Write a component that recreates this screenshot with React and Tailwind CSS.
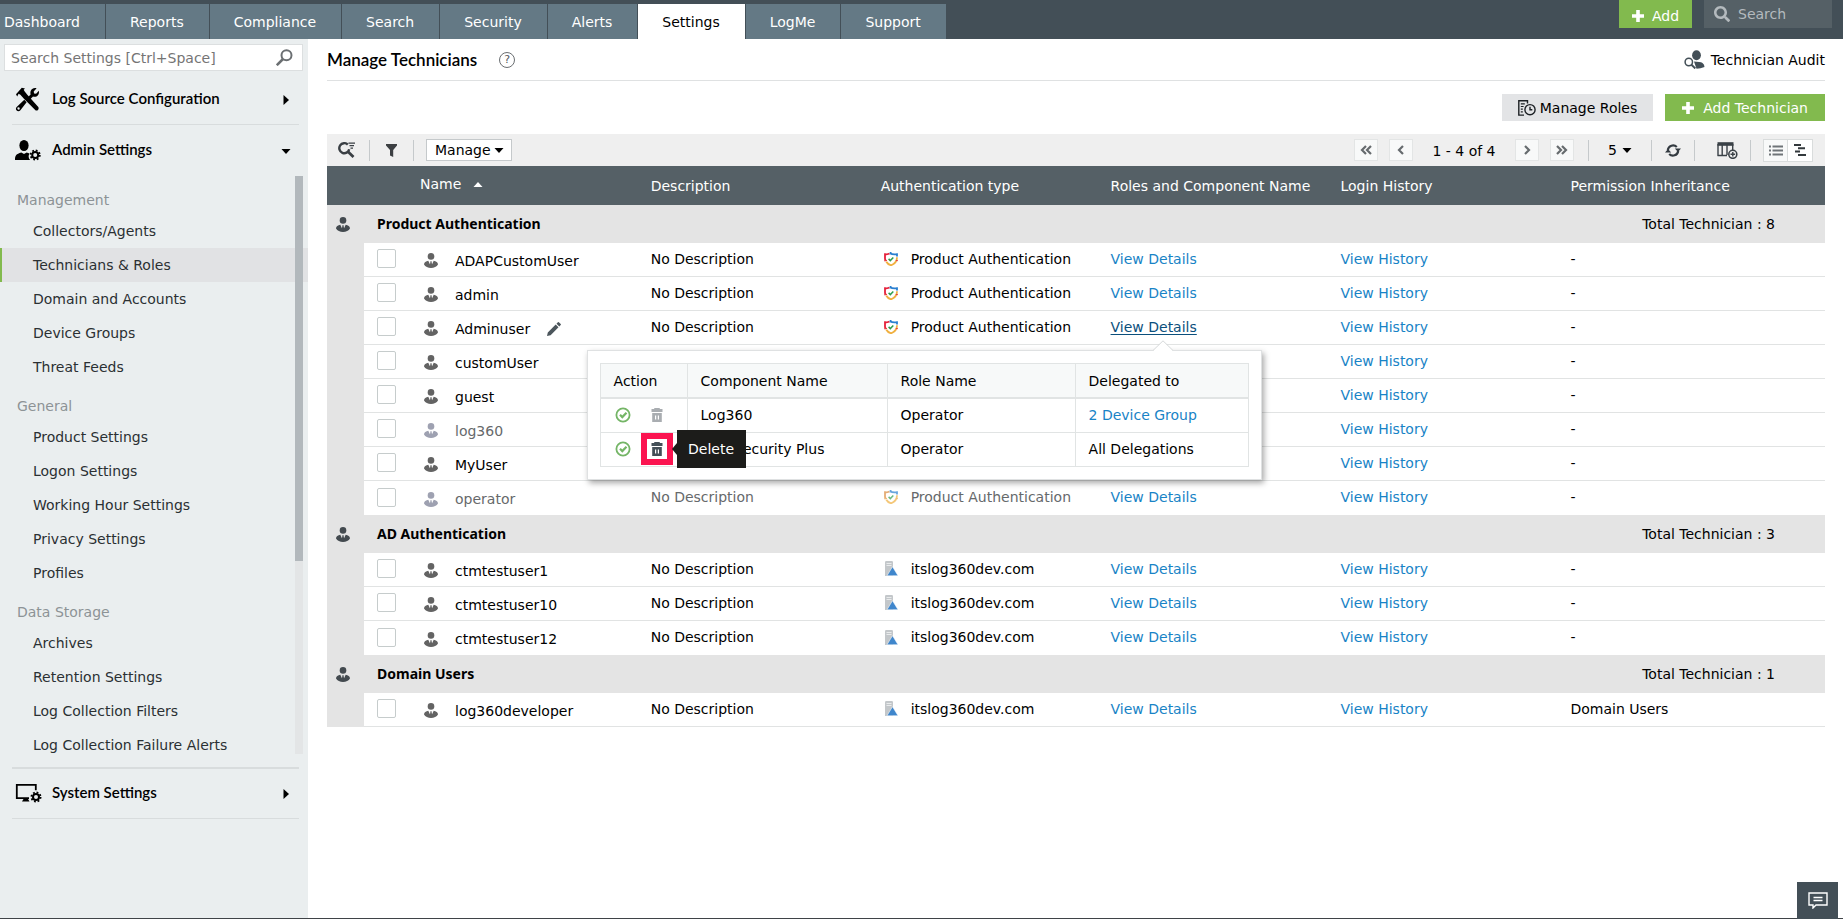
import { useState } from 'react'
import clsx from 'clsx'
import { FaSearch } from 'react-icons/fa'

const LINK = 'text-[#1883c6] hover:underline'

const tabs = ['Dashboard', 'Reports', 'Compliance', 'Search', 'Security', 'Alerts', 'Settings', 'LogMe', 'Support']

const menu = [
  {
    title: 'Management',
    items: ['Collectors/Agents', 'Technicians & Roles', 'Domain and Accounts', 'Device Groups', 'Threat Feeds'],
  },
  {
    title: 'General',
    items: ['Product Settings', 'Logon Settings', 'Working Hour Settings', 'Privacy Settings', 'Profiles'],
  },
  {
    title: 'Data Storage',
    items: ['Archives', 'Retention Settings', 'Log Collection Filters', 'Log Collection Failure Alerts'],
  },
]

const groups = [
  {
    title: 'Product Authentication',
    total: 8,
    auth: 'Product Authentication',
    users: [
      { name: 'ADAPCustomUser' },
      { name: 'admin' },
      { name: 'Adminuser', active: true },
      { name: 'customUser' },
      { name: 'guest' },
      { name: 'log360', disabled: true },
      { name: 'MyUser' },
      { name: 'operator', disabled: true },
    ],
  },
  {
    title: 'AD Authentication',
    total: 3,
    auth: 'itslog360dev.com',
    domain: true,
    users: [{ name: 'ctmtestuser1' }, { name: 'ctmtestuser10' }, { name: 'ctmtestuser12' }],
  },
  {
    title: 'Domain Users',
    total: 1,
    auth: 'itslog360dev.com',
    domain: true,
    users: [{ name: 'log360developer', inherit: 'Domain Users' }],
  },
]

const roles = [
  { component: 'Log360', role: 'Operator', delegated: '2 Device Group', link: true },
  { component: 'DataSecurity Plus', role: 'Operator', delegated: 'All Delegations', hover: true },
]

/* ---------- icons ---------- */

function UserIcon({ className }) {
  return (
    <svg viewBox="0 0 14 15" className={clsx('h-[15px] w-[14px] shrink-0', className)} fill="currentColor">
      <circle cx="7" cy="3.4" r="3.3" />
      <path d="M0 11.6C0 9.4 2 8.2 4.3 7.8l1.6 3.4.5-1.8-.5-1h2.2l-.5 1 .5 1.8 1.6-3.4C12 8.2 14 9.4 14 11.6 12.8 13.8 10 15 7 15s-5.8-1.2-7-3.4z" />
    </svg>
  )
}

function Caret({ dir = 'down', className }) {
  const d = { down: 'M.5 3h9L5 8z', up: 'M.5 8L5 3l4.5 5z', right: 'M2.5 0v10L8 5z' }[dir]
  return (
    <svg viewBox="0 0 10 10" className={clsx('size-[10px] shrink-0', className)} fill="currentColor">
      <path d={d} />
    </svg>
  )
}

function PlusIcon() {
  return (
    <svg viewBox="0 0 12 12" className="size-3" fill="currentColor">
      <path d="M4.200 0h3.600v4.200H12v3.600H7.800V12H4.200V7.800H0V4.200h4.200z" />
    </svg>
  )
}

function ToolsIcon() {
  return (
    <svg viewBox="0 0 24 25" className="h-[25px] w-6" fill="currentColor">
      {/* hammer */}
      <path d="M1 7.2L6.8.8l3.2.6-1.3 1.4 1 1.6 2.6 3.3 11 12.4c.6.8.4 2-.3 2.8-.8.8-2 1-2.8.2L8.7 11.5 5.4 7.7 3.6 6.8 2.2 9.4z" />
      {/* wrench */}
      <path d="M21.600 1.200l-2.900 3.200.4 2 2 .4 2.800-3c.4 2.700-.6 4.800-2.400 5.600-1.200.5-2.400.5-3.500.1l-3 3-2.100-2.300 2.700-2.800c-.6-2.200 0-4.200 1.500-5.400 1.300-1 3-1.400 4.500-.8z" />
      <path
        fillRule="evenodd"
        d="M9.300 12.800l2.300 2.400-6.200 8c-1 1.200-2.600 1.400-3.700.4-1.100-1-1-2.600 0-3.600zM3.500 20.300a1.200 1.200 0 1 0 .1 2.400 1.200 1.200 0 0 0-.1-2.400z"
      />
    </svg>
  )
}

function UserGearIcon() {
  return (
    <svg viewBox="0 0 26 21" className="h-[21px] w-[26px]" fill="currentColor">
      <ellipse cx="9" cy="5.500" rx="4.600" ry="5.500" />
      <path d="M0 20c0-4.500 1.200-5.800 6.300-7.400L9 14l2.700-1.400 2.800.9a5.600 5.600 0 0 0 .6 6.500z" />
      <circle cx="20.200" cy="15" r="3" fill="none" stroke="currentColor" strokeWidth="2" />
      <circle
        cx="20.200"
        cy="15"
        r="4.600"
        fill="none"
        stroke="currentColor"
        strokeWidth="1.800"
        strokeDasharray="1.800 1.813"
      />
    </svg>
  )
}

function MonitorGearIcon() {
  return (
    <svg viewBox="0 0 27 21" className="h-[21px] w-[27px]" fill="none" stroke="currentColor">
      <path d="M14 15.200H1.800V1.800h19v5.400" strokeWidth="1.800" />
      <path d="M8.500 16h4.500l1.500 2.500H7z" fill="currentColor" stroke="none" />
      <circle cx="21" cy="14" r="3" strokeWidth="2" />
      <circle cx="21" cy="14" r="4.600" strokeWidth="1.800" strokeDasharray="1.800 1.813" />
    </svg>
  )
}

function ShieldIcon({ faded }) {
  return (
    <svg
      viewBox="0 0 14 14"
      className={clsx('size-[14px] shrink-0', faded && 'opacity-70')}
      fill="none"
      strokeWidth="1.800"
    >
      <path d="M5.500 1.600C4.200 2.400 2.700 2.400 1 2.200v4.300c0 .8.200 1.500.5 2.200" stroke={faded ? '#d98a3c' : '#e5203a'} />
      <path d="M6 1.200c2 1.300 4.500 1.400 7 1v2.300M6.600 0v2.600" stroke="#2a7fd0" />
      <path d="M13 5.300c0 4-2 6.500-6 8-2-.7-3.800-2-4.700-3.600" stroke="#f0b040" />
      <path d="M.4 8.800l2.600-.4M11.800 8.500l2 .2" stroke={faded ? '#e8a040' : '#e84040'} strokeWidth="1.200" />
      <path d="M4.600 6.900l1.700 1.700 3-3.200" stroke="#2e9e4f" strokeWidth="1.500" />
    </svg>
  )
}

function DomainIcon() {
  return (
    <svg viewBox="0 0 14 15" className="h-[15px] w-[14px] shrink-0">
      <path d="M1 1.200Q1 0 2.200 0h5.600Q9 0 9 1.200V15H1z" fill="#c3c7ca" />
      <path d="M2.500 2.500h5M2.500 4.500h5" stroke="#e9ebec" />
      <path d="M3 14.700l5.500-9 5.500 9z" fill="#3f86cc" stroke="#fff" strokeWidth=".5" />
    </svg>
  )
}

function TrashIcon({ className }) {
  return (
    <svg viewBox="0 0 12 14" className={clsx('h-[14px] w-3', className)} fill="currentColor">
      <path d="M3.500 0h5l.5 1h2.500v3H.5V1H3z" />
      <path fillRule="evenodd" d="M1.200 5h9.600v9H1.200zM4 7.500v4h1.200v-4zm2.800 0v4H8v-4z" />
    </svg>
  )
}

function CheckIcon() {
  return (
    <svg viewBox="0 0 16 16" className="size-4" fill="none" stroke="#74b566" strokeWidth="1.800">
      <circle cx="8" cy="8" r="6.600" />
      <path d="M5 7.800l2.300 2.300 4.200-4.300" strokeWidth="2.200" />
    </svg>
  )
}

function PencilIcon() {
  return (
    <svg viewBox="0 0 14 14" className="size-[14px]" fill="#4c565c">
      <path d="M0 14l.8-3.600L8.700 2.500l2.800 2.800-7.900 7.900zM9.500 1.700L10.900.3q.5-.5 1 0l1.800 1.800q.5.5 0 1l-1.400 1.400z" />
    </svg>
  )
}

function SearchListIcon() {
  return (
    <svg viewBox="0 0 17 16" className="h-4 w-[17px]" fill="none" stroke="#3a3f44">
      <path d="M9.800 2.600A5 5 0 1 0 11.200 7.200" strokeWidth="2.400" />
      <path d="M9.800 9.600l5.700 5.400" strokeWidth="2.800" />
      <path d="M10.500 1.200H17M11.500 3.700H16M12.500 6.200H15" strokeWidth="1.200" />
    </svg>
  )
}

function RefreshIcon() {
  return (
    <svg viewBox="0 0 16 15" className="h-[15px] w-4">
      <path
        d="M2.800 7A5.300 5.300 0 0 1 11.800 4M13.200 8A5.300 5.300 0 0 1 4.200 11"
        fill="none"
        stroke="#333a40"
        strokeWidth="2.200"
      />
      <path d="M16 5.500H9.800L13 9zM0 9.500h6.200L3 6z" fill="#333a40" />
    </svg>
  )
}

function ColumnsIcon() {
  return (
    <svg viewBox="0 0 21 17" className="h-[17px] w-[21px]" fill="none" stroke="#3a4147">
      <path d="M.5 2h16" strokeWidth="3.600" />
      <path d="M1 2v12M5.200 2v12M10 2v11M15.700 2v6M.5 13.500h9.500" strokeWidth="1.400" />
      <circle cx="15.800" cy="12.300" r="4" strokeWidth="1.600" fill="#efefef" />
      <path d="M13.500 12.300h4.600M15.800 10v4.600" strokeWidth="1.400" />
    </svg>
  )
}

function RolesIcon() {
  return (
    <svg viewBox="0 0 18 16" className="h-4 w-[18px]" fill="none" stroke="#1c2024" strokeWidth="1.400">
      <path d="M9.500 3.500V.8H.8v14.300H6" />
      <path d="M2.800 3.800h4M2.800 6.500h2.800M2.800 9.200h2M2.800 11.900h2" strokeWidth="1.200" />
      <circle cx="12" cy="9.700" r="5.100" />
      <path d="M12 6.800v3h2.300" />
    </svg>
  )
}

function AuditIcon() {
  return (
    <svg viewBox="0 0 21 19" className="h-[19px] w-[21px]" fill="#434f57">
      <ellipse cx="12.500" cy="5.200" rx="4.400" ry="5" />
      <path d="M10 11.500q6 0 8.500 1.500Q20.500 14.500 20.500 17q-4 1.800-8 1.800z" />
      <circle cx="4.800" cy="12" r="3.700" fill="#fff" stroke="#434f57" strokeWidth="1.500" />
      <path d="M7.500 14.800l3.800 3.600" stroke="#434f57" strokeWidth="2" />
    </svg>
  )
}

function ChatIcon() {
  return (
    <svg viewBox="0 0 20 17" className="h-[17px] w-5" fill="none" stroke="#fff" strokeWidth="1.400">
      <path d="M1 1h18v12H8l-3 3v-3H1z" />
      <path d="M5.500 5.500h9M5.500 8.500h9" />
    </svg>
  )
}

/* ---------- page parts ---------- */

function TopBar() {
  return (
    <header className="flex h-[39px] items-start justify-between bg-[#434f57] text-white">
      <nav aria-label="Main navigation" className="flex h-full gap-px pt-1">
        {tabs.map((tab) => (
          <a
            key={tab}
            href="#"
            className={clsx(
              'flex items-center pr-[25px]',
              tab === 'Dashboard' ? 'pl-1' : 'pl-6',
              tab === 'Settings' ? 'bg-white text-black' : 'bg-[#647985]',
            )}
          >
            {tab}
          </a>
        ))}
      </nav>
      <div className="flex gap-3 pr-[11px]">
        <button className="flex h-7 w-[73px] items-center justify-center gap-2 bg-[#82ba4e] pt-1">
          <PlusIcon />
          Add
        </button>
        <label className="flex h-7 w-32 items-center gap-2 bg-[#556066] pl-[10px]">
          <FaSearch className="size-4 shrink-0 text-[#b4babe]" />
          <input
            aria-label="Search"
            placeholder="Search"
            className="w-full bg-transparent outline-none placeholder:text-[#b4babe]"
          />
        </label>
      </div>
    </header>
  )
}

function SectionLink({ icon, label, dir, className }) {
  return (
    <button
      className={clsx('mr-[9px] ml-3 flex items-center border-[#d8dcdd] text-left font-[Lato] font-semibold', className)}
    >
      <span className="flex w-10 items-center pl-[3px]">{icon}</span>
      <span className="flex-1 pb-[3px] text-[15px]">{label}</span>
      <Caret dir={dir} className="mr-2" />
    </button>
  )
}

function Sidebar() {
  return (
    <aside className="flex w-[308px] shrink-0 flex-col bg-[#eaeeef] pt-[5px]">
      <label className="mr-[5px] ml-1 flex h-[27px] items-center border border-[#dcdfe0] bg-white pr-[9px] pl-[6px]">
        <input
          aria-label="Search Settings"
          placeholder="Search Settings [Ctrl+Space]"
          className="min-w-0 flex-1 outline-none placeholder:text-[#757575]"
        />
        <svg viewBox="0 0 17 17" className="size-[17px]" fill="none" stroke="#6b6f72">
          <circle cx="10.500" cy="6.200" r="5" strokeWidth="2" />
          <path d="M7 10L.8 16.200" strokeWidth="2.600" />
        </svg>
      </label>
      <SectionLink icon={<ToolsIcon />} label="Log Source Configuration" dir="right" className="h-[54px] border-b pt-1" />
      <SectionLink icon={<UserGearIcon />} label="Admin Settings" dir="down" className="h-[51px]" />

      <div className="relative pt-[2px] pb-[5px]">
        {menu.map((group) => (
          <section key={group.title}>
            <h3 className="h-9 pt-3 pl-[17px] text-[#8d9396]">{group.title}</h3>
            <ul>
              {group.items.map((item) => (
                <li
                  key={item}
                  className={clsx(
                    'flex h-[34px] items-center border-l-2 pl-[31px]',
                    item === 'Technicians & Roles' ? 'border-[#82ba4e] bg-[#e1e2e4]' : 'border-transparent',
                  )}
                >
                  <a href="#" className="text-[#2b3033]">
                    {item}
                  </a>
                </li>
              ))}
            </ul>
          </section>
        ))}
        {/* scrollbar */}
        <div className="absolute top-0 right-[5px] bottom-[13px] w-2 bg-[#e3e5e6]">
          <div className="h-2/3 bg-[#b2b8bc]" />
        </div>
      </div>

      <SectionLink
        icon={<MonitorGearIcon />}
        label="System Settings"
        dir="right"
        className="h-[52px] border-t-2 border-b"
      />
    </aside>
  )
}

function PageButton({ label, d }) {
  return (
    <button
      aria-label={label}
      className="flex h-[22px] w-6 items-center justify-center border border-[#e3e5e5] bg-[#f8f9f9]"
    >
      <svg viewBox="0 0 12 10" className="h-[10px] w-3" fill="none" stroke="#666b6e" strokeWidth="2.200">
        <path d={d} />
      </svg>
    </button>
  )
}

function Divider() {
  return <span className="h-[21px] w-px bg-[#c5c9cb]" />
}

function Toolbar() {
  return (
    <div className="flex h-8 items-center justify-between bg-[#efefef]">
      <div className="flex items-center pl-[11px]">
        <button aria-label="Search list">
          <SearchListIcon />
        </button>
        <span className="w-[14px]" />
        <Divider />
        <button aria-label="Filter" className="px-4">
          <svg viewBox="0 0 11 13" className="h-[13px] w-[11px]" fill="#3c3f42">
            <path d="M0 0h11v1.600L7.200 6v7l-3.200-1.500V6L0 1.600z" />
          </svg>
        </button>
        <Divider />
        <span className="relative ml-3 flex items-center">
          <select
            aria-label="Manage"
            className="h-[22px] w-[86px] appearance-none border border-[#c5c9cb] bg-white pl-2 outline-none"
          >
            <option>Manage</option>
          </select>
          <Caret className="pointer-events-none absolute right-2" />
        </span>
      </div>

      <div className="flex items-center pr-3">
        <div className="flex items-center gap-[11px]">
          <PageButton label="First page" d="M6 1L2 5l4 4M11 1L7 5l4 4" />
          <PageButton label="Previous page" d="M8 1L4 5l4 4" />
        </div>
        <span className="w-[102px] pt-[2px] text-center">1 - 4 of 4</span>
        <div className="flex items-center gap-[11px]">
          <PageButton label="Next page" d="M4 1l4 4-4 4" />
          <PageButton label="Last page" d="M1 1l4 4-4 4M6 1l4 4-4 4" />
        </div>
        <span className="w-[14px]" />
        <Divider />
        <span className="relative mx-[19px] flex items-center">
          <select aria-label="Rows per page" className="w-6 appearance-none bg-transparent outline-none">
            <option>5</option>
          </select>
          <Caret className="pointer-events-none absolute right-0" />
        </span>
        <Divider />
        <button aria-label="Refresh" className="px-[13px]">
          <RefreshIcon />
        </button>
        <Divider />
        <button aria-label="Choose columns" className="pr-3 pl-[22px]">
          <ColumnsIcon />
        </button>
        <Divider />
        <div className="ml-3 flex h-[23px] divide-x divide-[#d9dcdc] border border-[#d9dcdc]">
          <button aria-label="Flat view" className="flex w-6 items-center justify-center bg-[#f8f9f9]">
            <svg viewBox="0 0 14 11" className="h-[11px] w-[14px]" stroke="#6f7478" strokeWidth="2">
              <path d="M0 1.500h2M3.500 1.500H14M0 5.500h2M3.500 5.500H14M0 9.500h2M3.500 9.500H14" />
            </svg>
          </button>
          <button aria-label="Grouped view" className="flex w-6 items-center justify-center bg-white">
            <svg viewBox="0 0 12 12" className="size-3" stroke="#33393d" strokeWidth="2">
              <path d="M0 1h7M4 4.300h7M1 7.600h5M4 11h8" />
            </svg>
          </button>
        </div>
      </div>
    </div>
  )
}

function RolesPopup() {
  return (
    <div className="absolute top-[33px] -left-[524px] z-10 w-[675px] border border-[#dfe1e2] bg-white p-3 text-black shadow-[2px_3px_6px_rgba(0,0,0,0.35)]">
      <svg viewBox="0 0 20 11" className="absolute -top-[11px] left-[565px] h-[11px] w-5">
        <path d="M0 11L10 1l10 10z" fill="#fff" />
        <path d="M0 10.500L10 .8l10 9.700" fill="none" stroke="#d5d8d9" />
      </svg>
      <table className="w-full table-fixed border-separate border-spacing-0 border-t border-l border-[#e1e4e4] [&_td]:h-[34px] [&_td]:border-r [&_td]:border-b [&_td]:border-[#e1e4e4] [&_td]:pl-[13px] [&_th]:h-[35px] [&_th]:border-r [&_th]:border-b-2 [&_th]:border-[#e1e4e4] [&_th]:bg-[#f7f9f9] [&_th]:pt-[2px] [&_th]:pl-[13px] [&_th]:text-left [&_th]:font-normal">
        <colgroup>
          <col className="w-[87px]" />
          <col className="w-[200px]" />
          <col className="w-[188px]" />
          <col />
        </colgroup>
        <thead>
          <tr>
            <th>Action</th>
            <th>Component Name</th>
            <th>Role Name</th>
            <th>Delegated to</th>
          </tr>
        </thead>
        <tbody>
          {roles.map((r) => (
            <tr key={r.component}>
              <td>
                <div className="flex items-center gap-[18px] pl-px">
                  <CheckIcon />
                  <button aria-label="Delete" className="relative flex size-4 items-center justify-center">
                    <TrashIcon className={r.hover ? 'text-[#434f57]' : 'text-[#a9adb1]'} />
                    {r.hover && (
                      <>
                        <span className="absolute -inset-2 border-[6px] border-[#fb1450]" />
                        <span className="absolute -top-[11px] left-7 flex h-[38px] w-[69px] items-center justify-center bg-[#1c1c1a] text-white">
                          <span className="absolute top-[13px] -left-[5px] border-y-[6px] border-r-[5px] border-y-transparent border-r-[#1c1c1a]" />
                          Delete
                        </span>
                      </>
                    )}
                  </button>
                </div>
              </td>
              <td>{r.component}</td>
              <td>{r.role}</td>
              <td>
                {r.link ? (
                  <a href="#" className={LINK}>
                    {r.delegated}
                  </a>
                ) : (
                  r.delegated
                )}
              </td>
            </tr>
          ))}
        </tbody>
      </table>
    </div>
  )
}

function UserRow({ user, group, last, checked, onToggle }) {
  const cell = clsx('h-[34px] pb-[2px]', !last && 'border-b border-[#e1e3e3]')
  return (
    <tr className={clsx(user.disabled && 'text-[#66696b]')}>
      <td className="bg-[#e4e4e4]" />
      <td className={clsx(cell, 'pl-[13px]')}>
        <input
          type="checkbox"
          aria-label={`Select ${user.name}`}
          checked={checked}
          onChange={onToggle}
          className="block size-[19px] appearance-none rounded-[2px] border border-[#c6cccc] bg-white checked:bg-[#82ba4e]"
        />
      </td>
      <td className={cell}>
        <div className="flex items-center gap-[17px] pt-1 pl-1">
          <UserIcon className={user.disabled ? 'text-[#9ea1b1]' : 'text-[#636363]'} />
          {user.name}
          {user.active && (
            <button aria-label="Edit technician">
              <PencilIcon />
            </button>
          )}
        </div>
      </td>
      <td className={cell}>No Description</td>
      <td className={cell}>
        <div className="flex items-center gap-[13px] pl-[3px]">
          {group.domain ? <DomainIcon /> : <ShieldIcon faded={user.disabled} />}
          {group.auth}
        </div>
      </td>
      <td className={cell}>
        <span className="relative inline-block">
          <a href="#" className={user.active ? 'text-[#0b4f7c] underline underline-offset-2' : LINK}>
            View Details
          </a>
          {user.active && <RolesPopup />}
        </span>
      </td>
      <td className={cell}>
        <a href="#" className={LINK}>
          View History
        </a>
      </td>
      <td className={clsx(cell, 'text-black')}>{user.inherit || '-'}</td>
    </tr>
  )
}

function TechnicianTable() {
  const [selected, setSelected] = useState([])

  const toggle = (name) =>
    setSelected((s) => (s.includes(name) ? s.filter((n) => n !== name) : [...s, name]))

  return (
    <table className="w-full table-fixed border-separate border-spacing-0 text-left">
      <colgroup>
        <col className="w-[37px]" />
        <col className="w-[56px]" />
        <col className="w-[15.4%]" />
        <col className="w-[15.35%]" />
        <col className="w-[15.35%]" />
        <col className="w-[15.35%]" />
        <col className="w-[15.35%]" />
        <col />
      </colgroup>
      <thead>
        <tr className="h-[39px] bg-[#556066] text-white [&_th]:font-normal">
          <th colSpan={2} aria-label="Select" />
          <th>
            <span className="flex items-center gap-3 pb-1">
              Name <Caret dir="up" />
            </span>
          </th>
          <th>Description</th>
          <th>Authentication type</th>
          <th>Roles and Component Name</th>
          <th>Login History</th>
          <th>Permission Inheritance</th>
        </tr>
      </thead>
      {groups.map((group) => (
        <tbody key={group.title}>
          <tr className="h-[38px] bg-[#e4e4e4]">
            <td className="pl-[9px]">
              <UserIcon className="text-[#434a4f]" />
            </td>
            <th colSpan={4} className="pl-[13px] font-['Noto_Sans'] font-bold">
              {group.title}
            </th>
            <td colSpan={3} className="pr-[50px] text-right">
              Total Technician : {group.total}
            </td>
          </tr>
          {group.users.map((user, i) => (
            <UserRow
              key={user.name}
              user={user}
              group={group}
              last={i === group.users.length - 1 && group.total !== 1}
              checked={selected.includes(user.name)}
              onToggle={() => toggle(user.name)}
            />
          ))}
        </tbody>
      ))}
    </table>
  )
}

export default function App() {
  return (
    <div className="flex min-h-screen flex-col border-b border-[#3f4347] bg-white font-['DejaVu_Sans',sans-serif] text-[14px] leading-5 text-black">
      <TopBar />
      <div className="flex flex-1">
        <Sidebar />
        <main className="min-w-0 flex-1 pr-[18px] pl-[19px]">
          <div className="flex h-[42px] items-center justify-between border-b border-[#dfe1e2]">
            <div className="flex items-center gap-[22px]">
              <h1 className="font-[Lato] text-[17px] font-semibold">Manage Technicians</h1>
              <button
                aria-label="Help"
                className="flex size-4 items-center justify-center rounded-full border border-[#6a6e71] text-[11px] leading-none text-[#55595c]"
              >
                ?
              </button>
            </div>
            <a href="#" className="flex items-center gap-[6px]">
              <AuditIcon />
              Technician Audit
            </a>
          </div>

          <div className="flex justify-end gap-3 py-[13px]">
            <button className="flex h-[27px] items-center gap-1 bg-[#e3e4e6] px-4">
              <RolesIcon />
              Manage Roles
            </button>
            <button className="flex h-[27px] items-center gap-[9px] bg-[#82ba4e] px-[17px] text-white">
              <PlusIcon />
              Add Technician
            </button>
          </div>

          <Toolbar />
          <TechnicianTable />
        </main>
      </div>

      <button
        aria-label="Feedback"
        className="fixed right-[5px] bottom-0 flex h-[37px] w-[41px] items-center justify-center bg-[#434f57]"
      >
        <ChatIcon />
      </button>
    </div>
  )
}
